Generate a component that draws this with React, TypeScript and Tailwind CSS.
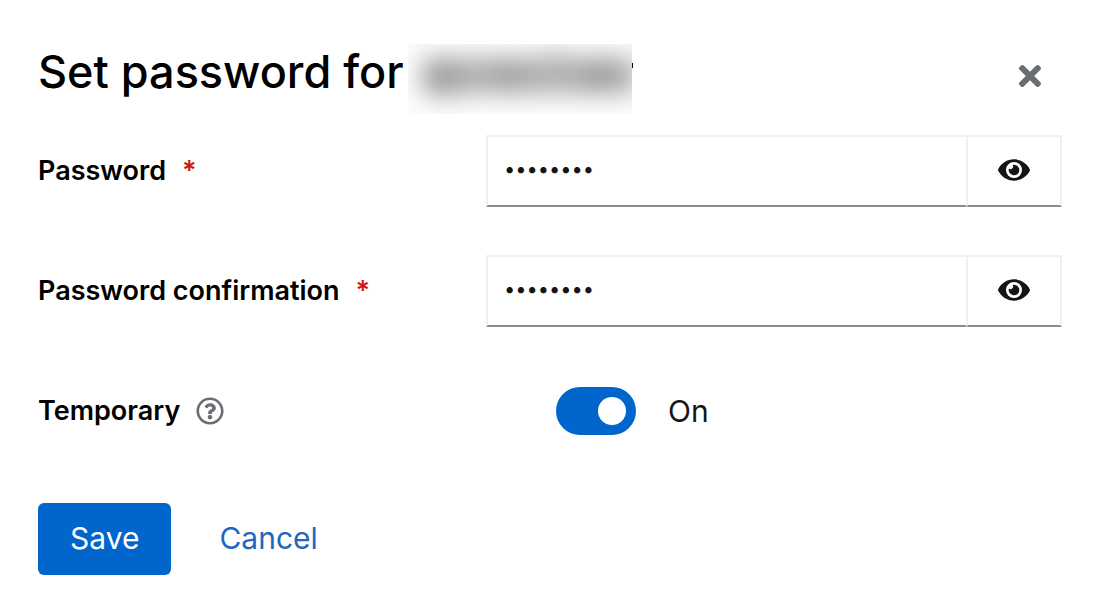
import { useState } from "react";
import { FaEye, FaTimes, FaRegQuestionCircle } from "react-icons/fa";

function RedactedName() {
  return (
    <svg className="h-[70px] w-[226px] shrink-0" viewBox="0 0 226 70" role="img" aria-label="Hidden user name">
      <defs>
        <filter id="haze" x="-20%" y="-80%" width="140%" height="260%" colorInterpolationFilters="sRGB">
          <feGaussianBlur stdDeviation="12 13" />
        </filter>
        <clipPath id="frame">
          <rect width="224" height="70" />
        </clipPath>
      </defs>
      <g clipPath="url(#frame)">
        <rect width="224" height="70" fill="#fdfdfd" />
        <g filter="url(#haze)">
          <rect x="14" y="14" width="214" height="35" fill="#000" opacity="0.32" />
          <rect x="20" y="20" width="30" height="34" fill="#000" opacity="0.12" />
          <rect x="88" y="18" width="28" height="26" fill="#000" opacity="0.1" />
          <rect x="176" y="18" width="32" height="26" fill="#000" opacity="0.13" />
          <rect x="136" y="2" width="24" height="14" fill="#000" opacity="0.1" />
        </g>
      </g>
      <rect x="224" y="19" width="1" height="5" fill="#000" />
    </svg>
  );
}

function PasswordRow({ id, label }: { id: string; label: string }) {
  const [value, setValue] = useState("password");
  const [visible, setVisible] = useState(false);
  return (
    <div className="grid grid-cols-[7fr_9fr] items-center">
      <label htmlFor={id} className="text-[27px] leading-9 font-semibold text-black">
        {label}
        <span className="ml-4 text-[27px] leading-9 text-[#c9190b]" aria-hidden="true">*</span>
      </label>
      <div className="flex h-18">
        <input
          id={id}
          type={visible ? "text" : "password"}
          value={value}
          required
          onChange={(e) => setValue(e.target.value)}
          className={
            "min-w-0 flex-1 border-2 border-r-0 border-[#f0f0f0] border-b-[#8a8d90] bg-white px-4 pb-1 text-[#151515] outline-none " +
            (visible ? "text-[30px]" : "text-xl")
          }
        />
        <button
          type="button"
          aria-label={visible ? "Hide password" : "Show password"}
          onClick={() => setVisible(!visible)}
          className="flex w-24 items-center justify-center border-2 border-[#f0f0f0] border-b-[#8a8d90] pb-0.5 text-[32px] text-[#151515]"
        >
          <FaEye />
        </button>
      </div>
    </div>
  );
}

export default function App() {
  const [temporary, setTemporary] = useState(true);
  return (
    <main className="min-h-screen bg-white pt-11 pr-[42px] pb-10 pl-[38px] font-['Inter',sans-serif] text-[#151515]">
      <header className="flex items-start">
        <h1 className="flex flex-1 items-start gap-1 text-[45px] leading-14 font-medium whitespace-nowrap text-black">
          Set password for
          <RedactedName />
        </h1>
        <button type="button" aria-label="Close" className="flex size-16 items-center justify-center text-[32px] text-[#6a6e73]">
          <FaTimes />
        </button>
      </header>
      <form className="mt-[21px]" onSubmit={(e) => e.preventDefault()}>
        <div className="flex flex-col gap-12">
          <PasswordRow id="password" label="Password" />
          <PasswordRow id="confirmation" label="Password confirmation" />
        </div>
        <div className="mt-15 grid grid-cols-[7fr_9fr] items-center">
          <div className="flex items-center gap-4">
            <label htmlFor="temporary" className="text-[27px] leading-9 font-semibold text-black">Temporary</label>
            <button type="button" aria-label="More info" className="text-[28px] text-[#6a6e73]">
              <FaRegQuestionCircle />
            </button>
          </div>
          <div className="flex h-12 items-center gap-8 pl-[70px]">
            <input
              id="temporary"
              type="checkbox"
              role="switch"
              checked={temporary}
              onChange={(e) => setTemporary(e.target.checked)}
              className="flex h-12 w-20 shrink-0 appearance-none items-center rounded-full bg-[#8a8d90] px-[10px] before:size-7 before:rounded-full before:bg-white before:content-[''] checked:justify-end checked:bg-[#0066cc]"
            />
            <span className="text-[30px] leading-9">{temporary ? "On" : "Off"}</span>
          </div>
        </div>
        <div className="mt-17 flex gap-4">
          <button type="submit" className="h-18 rounded-md bg-[#0066cc] px-8 pb-0.5 text-[30px] text-white">Save</button>
          <button type="button" className="h-18 px-8 pb-0.5 text-[30px] text-[#1f66bf]">Cancel</button>
        </div>
      </form>
    </main>
  );
}
